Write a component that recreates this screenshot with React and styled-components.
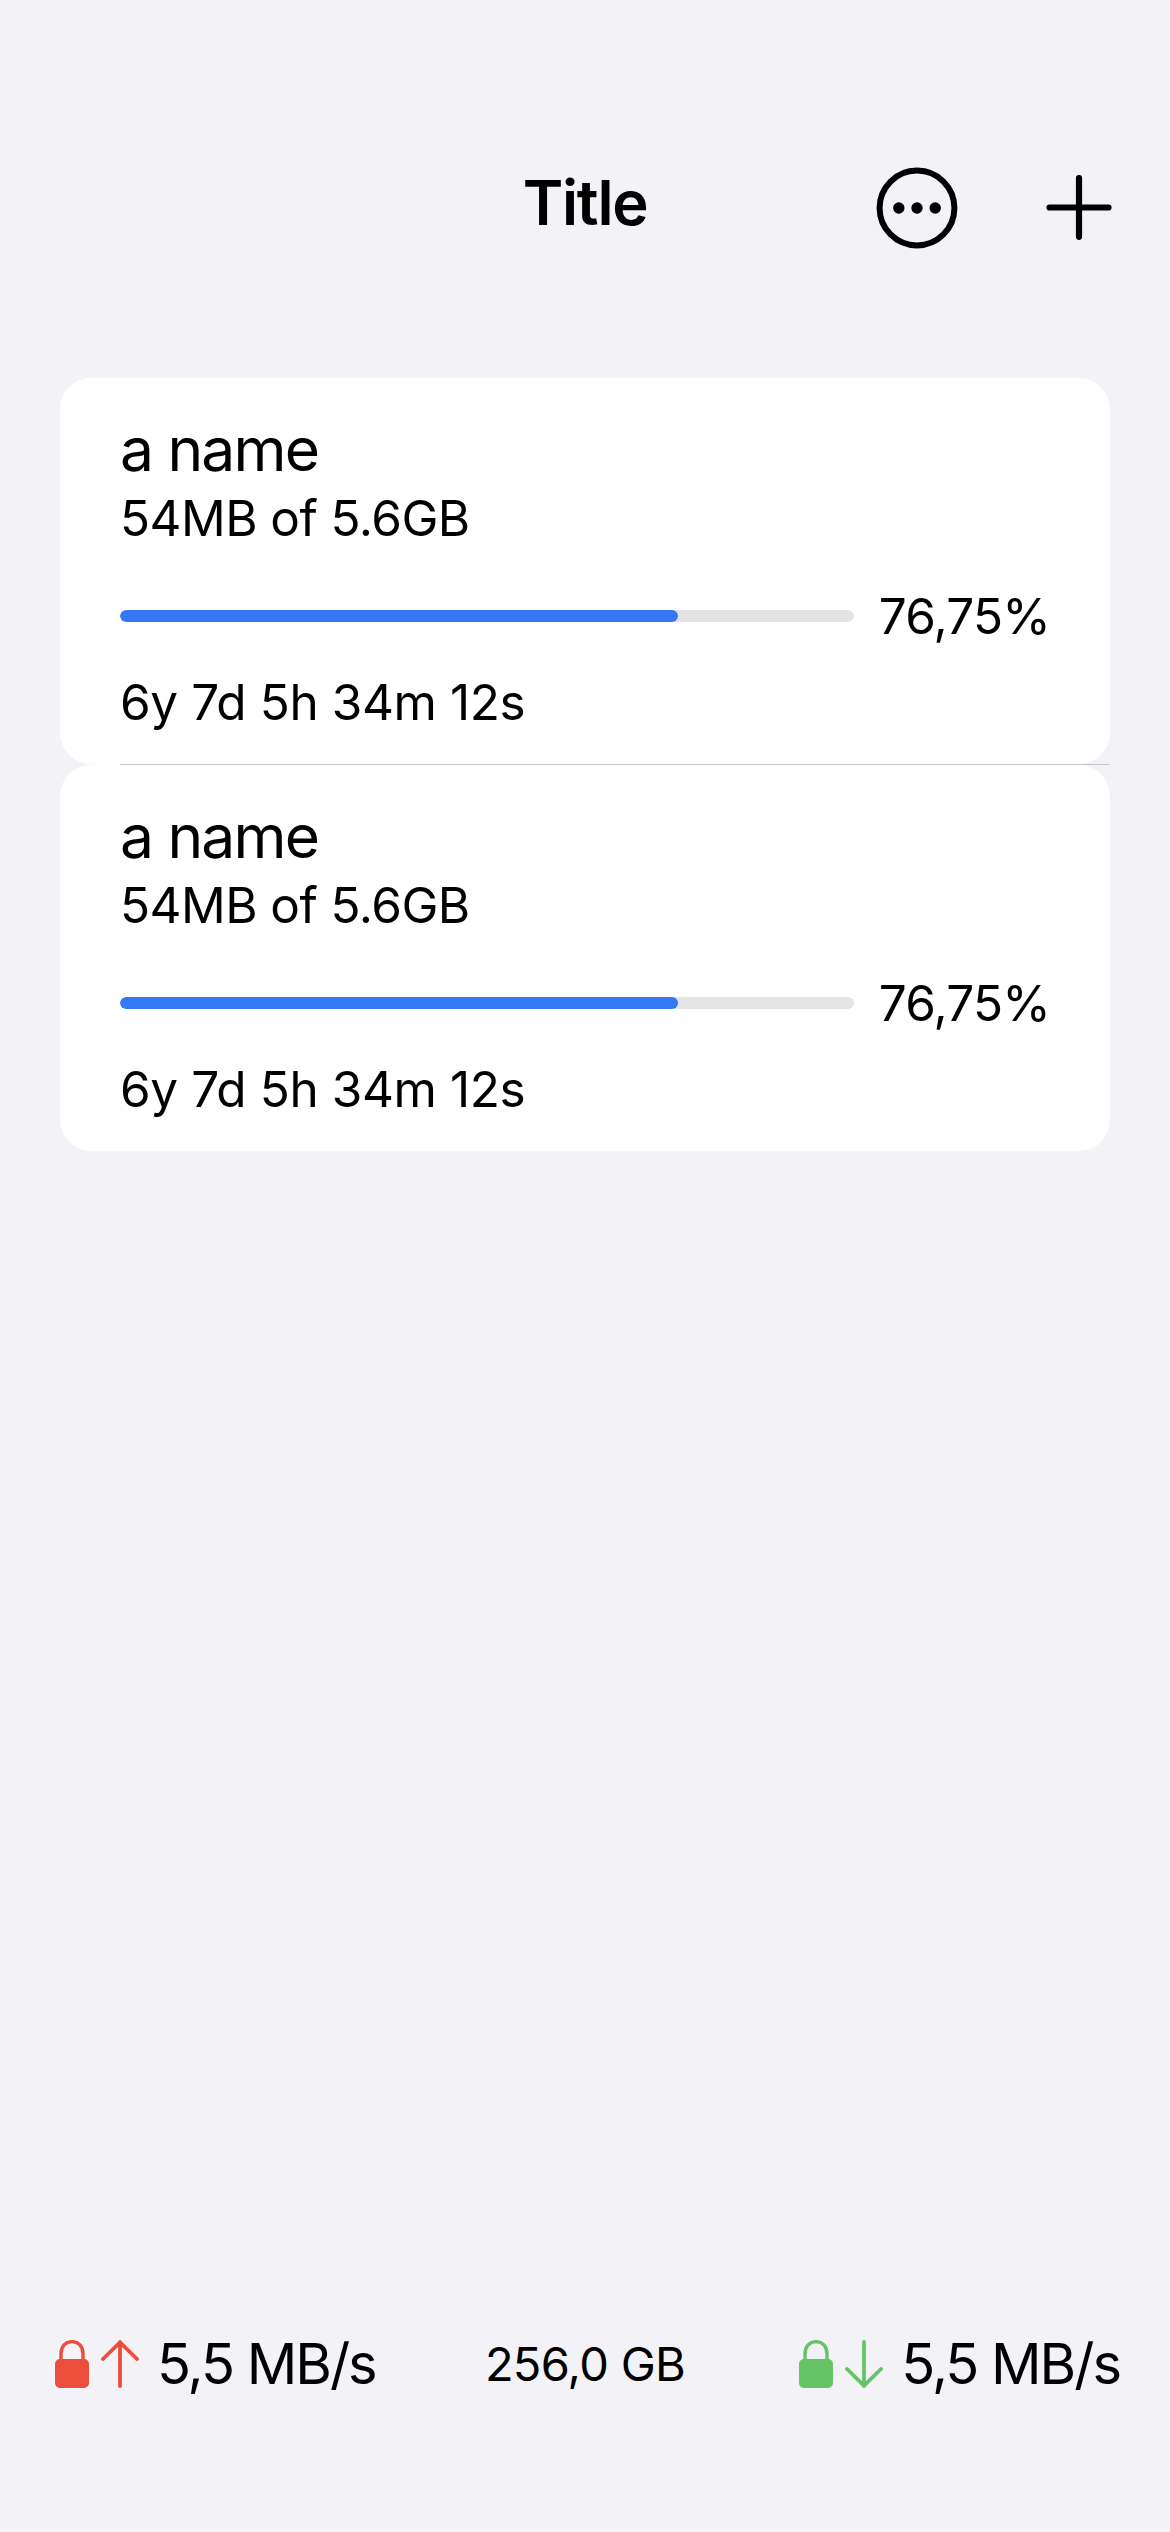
import React from "react";
import styled, { createGlobalStyle } from "styled-components";

const GlobalStyle = createGlobalStyle`
  body {
    margin: 0;
    background: #f2f2f7;
  }
`;

const Screen = styled.div`
  box-sizing: border-box;
  width: 1170px;
  height: 2532px;
  display: flex;
  flex-direction: column;
  background: #f2f2f7;
  color: #000;
  font-family: Inter, "Liberation Sans", sans-serif;
  overflow: hidden;
`;

const Header = styled.header`
  box-sizing: border-box;
  height: 378px;
  padding: 160px 54px 122px;
  display: grid;
  grid-template-columns: 1fr auto 1fr;
  align-items: center;
`;

const Text = styled.span`
  display: block;
  white-space: nowrap;
  font-size: ${(p) => p.$size}px;
  line-height: ${(p) => p.$line}px;
  letter-spacing: ${(p) => p.$track || 0}px;
  font-weight: ${(p) => p.$weight || 400};
`;

const Title = styled(Text).attrs({ as: "h1" })`
  grid-column: 2;
  margin: 0;
  padding-bottom: 11px;
`;

const Actions = styled.div`
  display: flex;
  justify-content: flex-end;
  align-items: center;
  gap: 84px;
`;

const IconButton = styled.button`
  display: flex;
  padding: 0;
  border: 0;
  background: none;
  color: inherit;
`;

const List = styled.main`
  display: flex;
  flex-direction: column;
  padding: 0 60px;
`;

const Card = styled.article`
  box-sizing: border-box;
  height: 386px;
  padding: 33px 60px 0;
  border-radius: 31px;
  background: #fff;
`;

const Divider = styled.div`
  height: 1px;
  background: linear-gradient(to right, #f2f2f7 22px, #fff 36px, #fff 60px, #c6c6c8 60px);
`;

const ProgressRow = styled.div`
  display: flex;
  align-items: center;
  justify-content: space-between;
  margin: 36px 0 24px;
`;

const Track = styled.div`
  width: 734px;
  height: 12px;
  border-radius: 6px;
  background: #e4e4e5;
  overflow: hidden;
`;

const Fill = styled.div`
  height: 100%;
  border-radius: 6px;
  background: #3478f6;
`;

const Footer = styled.footer`
  height: 100px;
  margin-top: auto;
  padding: 0 50px 118px;
  display: grid;
  grid-template-columns: 1fr auto 1fr;
  align-items: center;
`;

const Rate = styled.div`
  display: flex;
  align-items: center;
  justify-self: ${(p) => p.$side};
  margin-left: 5px;
`;

const Glyphs = styled.div`
  display: flex;
  gap: 12px;
  margin-right: 18px;
  color: ${(p) => p.$color};
`;

const LockIcon = () => (
  <svg width="34" height="48" viewBox="0 0 34 48">
    <rect y="19" width="34" height="29" rx="5" fill="currentColor" />
    <path d="M6 21V14C6 6.5 10.5 1.6 17 1.6S28 6.5 28 14V21" fill="none" stroke="currentColor" strokeWidth="3.4" />
  </svg>
);

const ArrowIcon = ({ down }) => (
  <svg width="38" height="48" viewBox="0 0 38 48">
    <path
      d={down ? "M19 2V46M2 29L19 45.7L36 29" : "M19 46V2M2 19L19 2.3L36 19"}
      fill="none"
      stroke="currentColor"
      strokeWidth="3.8"
      strokeLinecap="round"
      strokeLinejoin="round"
    />
  </svg>
);

const MoreIcon = () => (
  <svg width="82" height="82" viewBox="0 0 82 82">
    <circle cx="41" cy="41" r="37.4" fill="none" stroke="currentColor" strokeWidth="6" />
    {[22.8, 41, 59.2].map((x) => (
      <circle key={x} cx={x} cy="41" r="5.7" fill="currentColor" />
    ))}
  </svg>
);

const PlusIcon = () => (
  <svg width="74" height="82" viewBox="0 0 74 82">
    <path d="M37 11.2V69.8M7.5 40.5H66.5" stroke="currentColor" strokeWidth="6.2" strokeLinecap="round" />
  </svg>
);

const transfers = [
  { name: "a name", size: "54MB of 5.6GB", percent: 76, label: "76,75%", time: "6y 7d 5h 34m 12s" },
  { name: "a name", size: "54MB of 5.6GB", percent: 76, label: "76,75%", time: "6y 7d 5h 34m 12s" },
];

const Transfer = ({ item }) => (
  <Card>
    <Text $size={60.5} $line={76} $track={-1.8}>{item.name}</Text>
    <Text $size={49.5} $line={62} $track={-0.55}>{item.size}</Text>
    <ProgressRow>
      <Track>
        <Fill style={{ width: `${item.percent}%` }} />
      </Track>
      <Text $size={49.5} $line={62} $track={-0.8}>{item.label}</Text>
    </ProgressRow>
    <Text $size={49.5} $line={62} $track={-0.4}>{item.time}</Text>
  </Card>
);

export default function App() {
  return (
    <>
      <GlobalStyle />
      <Screen>
        <Header>
          <Title $size={61.5} $line={76} $track={-1.3} $weight={600}>Title</Title>
          <Actions>
            <IconButton aria-label="More"><MoreIcon /></IconButton>
            <IconButton aria-label="Add"><PlusIcon /></IconButton>
          </Actions>
        </Header>
        <List>
          {transfers.map((item, i) => (
            <React.Fragment key={i}>
              {i > 0 && <Divider />}
              <Transfer item={item} />
            </React.Fragment>
          ))}
        </List>
        <Footer>
          <Rate $side="start">
            <Glyphs $color="#eb4e3d"><LockIcon /><ArrowIcon /></Glyphs>
            <Text $size={56} $line={70} $track={-2}>5,5 MB/s</Text>
          </Rate>
          <Text $size={47} $line={60} $track={-0.7}>256,0 GB</Text>
          <Rate $side="end">
            <Glyphs $color="#65c466"><LockIcon /><ArrowIcon down /></Glyphs>
            <Text $size={56} $line={70} $track={-2}>5,5 MB/s</Text>
          </Rate>
        </Footer>
      </Screen>
    </>
  );
}
